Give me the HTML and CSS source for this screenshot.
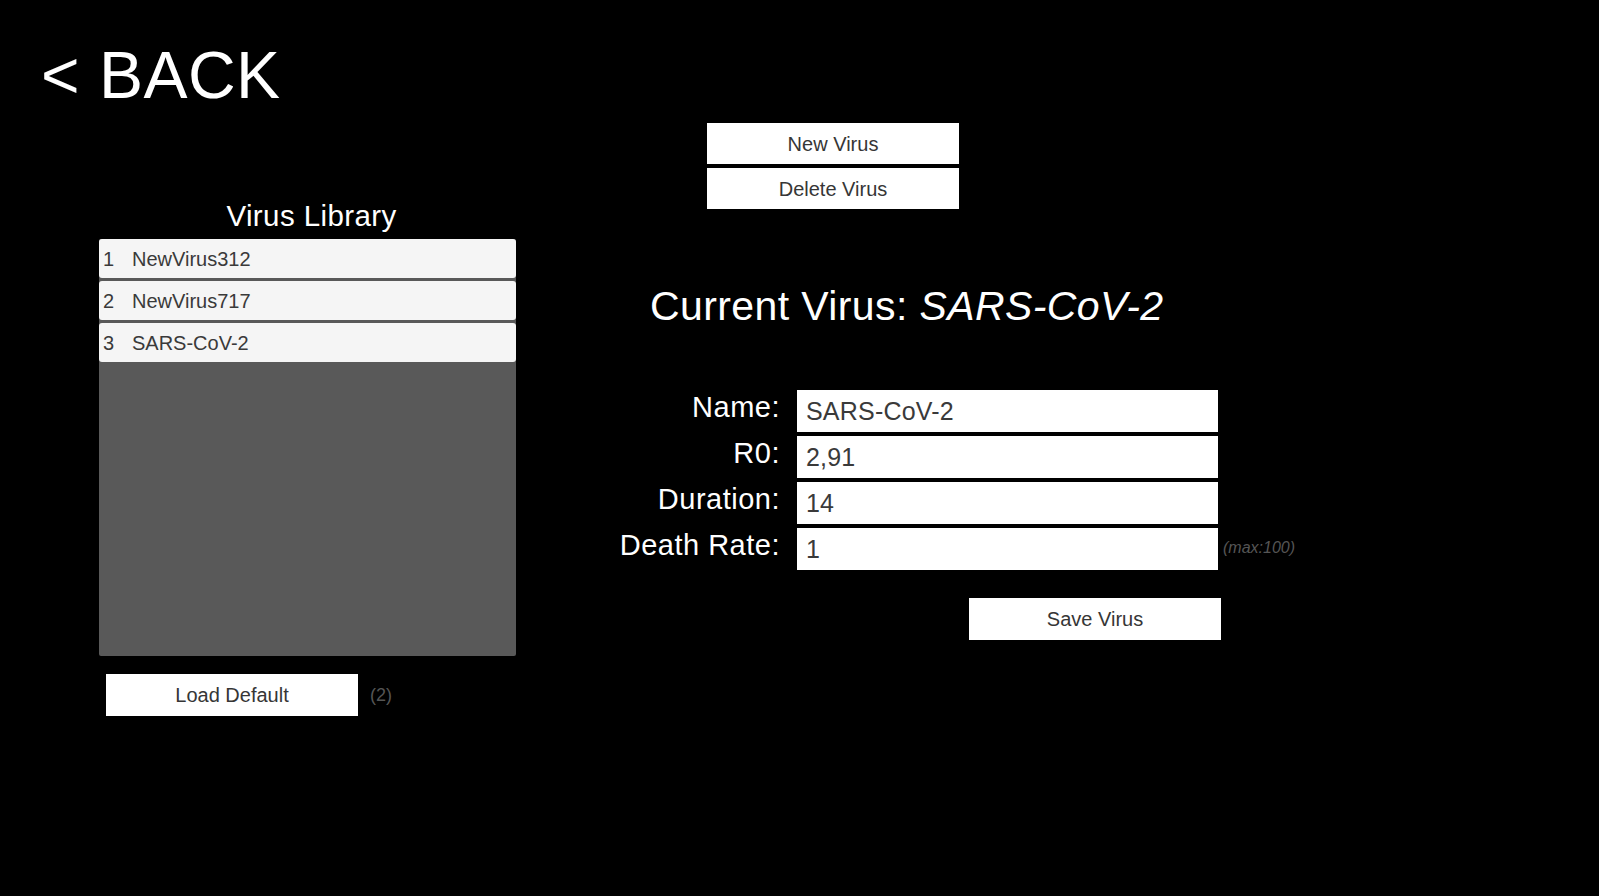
FILE: index.html
```html
<!DOCTYPE html>
<html>
<head>
<meta charset="utf-8">
<link rel="stylesheet" href="styles.css">
</head>
<body>
<div class="page">
  <div class="left">
    <div class="back">&lt; BACK</div>
    <div class="library">
      <div class="lib-title">Virus Library</div>
      <div class="lib-panel">
        <div class="lib-item"><span class="num">1</span><span>NewVirus312</span></div>
        <div class="lib-item"><span class="num">2</span><span>NewVirus717</span></div>
        <div class="lib-item"><span class="num">3</span><span>SARS-CoV-2</span></div>
      </div>
      <div class="load-row">
        <div class="btn load-btn">Load Default</div>
        <span class="count">(2)</span>
      </div>
    </div>
  </div>
  <div class="right">
    <div class="top-buttons">
      <div class="btn">New Virus</div>
      <div class="btn">Delete Virus</div>
    </div>
    <div class="current">Current Virus: <em>SARS-CoV-2</em></div>
    <div class="form">
      <div class="label">Name:</div>
      <div class="field">SARS-CoV-2</div>
      <div></div>
      <div class="label">R0:</div>
      <div class="field">2,91</div>
      <div></div>
      <div class="label">Duration:</div>
      <div class="field">14</div>
      <div></div>
      <div class="label">Death Rate:</div>
      <div class="field">1</div>
      <div class="hint">(max:100)</div>
    </div>
    <div class="btn save-btn">Save Virus</div>
  </div>
</div>
</body>
</html>
```
FILE: styles.css
```css
html, body {
  margin: 0;
  padding: 0;
  background: #000;
  width: 1599px;
  height: 896px;
  overflow: hidden;
  font-family: "Liberation Sans", Arial, sans-serif;
}
.page {
  display: flex;
  align-items: flex-start;
}
.left {
  width: 600px;
  box-sizing: border-box;
  padding: 42px 0 0 41px;
}
.back {
  color: #fff;
  font-size: 66px;
  line-height: 66px;
  letter-spacing: 0.5px;
  white-space: nowrap;
}
.library {
  margin-top: 93px;
  margin-left: 58px;
  width: 417px;
}
.lib-title {
  color: #fff;
  font-size: 29.5px;
  line-height: 29px;
  text-align: center;
  padding-left: 8px;
  letter-spacing: 0.4px;
}
.lib-panel {
  margin-top: 9px;
  height: 417px;
  background: #595959;
  border-radius: 2px;
  display: flex;
  flex-direction: column;
  gap: 3px;
}
.lib-item {
  height: 38px;
  line-height: 38px;
  padding-top: 1px;
  background: #f5f5f5;
  border-radius: 3px;
  color: #3a3a3a;
  font-size: 20px;
  padding-left: 4px;
  display: flex;
}
.num {
  width: 29px;
}
.load-row {
  margin-top: 18px;
  margin-left: 7px;
  display: flex;
  align-items: center;
}
.btn {
  width: 252px;
  height: 40px;
  line-height: 40px;
  padding-top: 1px;
  background: #fff;
  color: #363636;
  font-size: 20px;
  text-align: center;
}
.load-btn {
  height: 41px;
  line-height: 41px;
}
.count {
  margin-left: 12px;
  color: #555;
  font-size: 18px;
}
.right {
  padding-top: 123px;
}
.top-buttons {
  margin-left: 107px;
  display: flex;
  flex-direction: column;
  gap: 4px;
}
.current {
  margin-top: 77px;
  margin-left: 50px;
  color: #fff;
  font-size: 41px;
  line-height: 41px;
  white-space: nowrap;
  letter-spacing: 0.4px;
}
.current em {
  font-style: italic;
}
.form {
  margin-top: 63px;
  display: grid;
  grid-template-columns: 197px 421px auto;
  row-gap: 4px;
}
.label {
  color: #fff;
  font-size: 29px;
  line-height: 34px;
  text-align: right;
  padding-right: 17px;
  white-space: nowrap;
  align-self: start;
  letter-spacing: 0.5px;
}
.field {
  height: 42px;
  line-height: 42px;
  background: #fff;
  color: #3a3a3a;
  font-size: 25px;
  letter-spacing: 0.2px;
  padding-left: 9px;
  box-sizing: border-box;
}
.hint {
  align-self: center;
  padding-left: 5px;
  padding-bottom: 3px;
  color: #555;
  font-size: 16px;
  font-style: italic;
  white-space: nowrap;
}
.save-btn {
  margin-top: 28px;
  margin-left: 369px;
  height: 41px;
  line-height: 41px;
}
```
